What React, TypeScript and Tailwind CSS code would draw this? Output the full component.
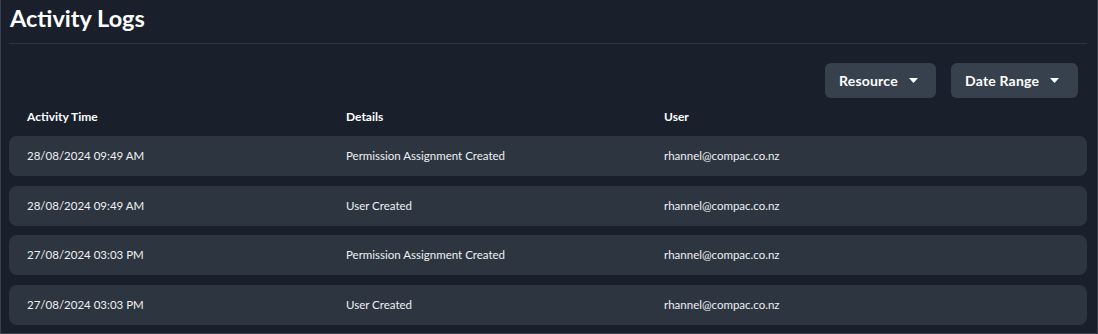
const logs = [
  { time: "28/08/2024 09:49 AM", details: "Permission Assignment Created", user: "rhannel@compac.co.nz" },
  { time: "28/08/2024 09:49 AM", details: "User Created", user: "rhannel@compac.co.nz" },
  { time: "27/08/2024 03:03 PM", details: "Permission Assignment Created", user: "rhannel@compac.co.nz" },
  { time: "27/08/2024 03:03 PM", details: "User Created", user: "rhannel@compac.co.nz" },
];

const Caret = () => (
  <svg width="9" height="5" viewBox="0 0 9 5" className="ml-[11px]">
    <path d="M0 0h9L4.5 5z" fill="currentColor" />
  </svg>
);

const FilterButton = ({ label, width }: { label: string; width: string }) => (
  <button
    className={`flex h-[35px] ${width} items-center rounded-[6px] bg-[#37414d] pl-[14px] text-[14px] font-bold tracking-[0.2px] text-white`}
  >
    {label}
    <Caret />
  </button>
);

export default function App() {
  return (
    <div
      className="h-[334px] w-[1098px] overflow-hidden border-x border-b border-[#3a414c] bg-[#19202b] text-white"
      style={{ fontFamily: "Lato, 'Noto Sans', sans-serif" }}
    >
      <div className="px-2">
        <h1 className="pl-[1px] pt-[3px] text-[23.5px] font-bold leading-[30px]">Activity Logs</h1>
        <div className="mt-[10px] h-px w-[1078px] bg-[#2e3540]" />

        <div className="mt-[19px] flex justify-end gap-[15px] pr-[11px]">
          <FilterButton label="Resource" width="w-[111px]" />
          <FilterButton label="Date Range" width="w-[127px]" />
        </div>

        <div className="mt-[9px] grid h-[20px] grid-cols-[319px_318px_1fr] items-center pl-[18px] text-[12px] font-bold">
          <span>Activity Time</span>
          <span>Details</span>
          <span>User</span>
        </div>

        <div className="mt-[9px] flex w-[1078px] flex-col gap-[9.5px]">
          {logs.map((log, idx) => (
            <div
              key={idx}
              className="grid h-[40px] grid-cols-[319px_318px_1fr] items-center rounded-[8px] bg-[#2d3640] pl-[18px] text-[11.5px] text-[#eef0f3]"
            >
              <span>{log.time}</span>
              <span>{log.details}</span>
              <span>{log.user}</span>
            </div>
          ))}
        </div>
      </div>
    </div>
  );
}
